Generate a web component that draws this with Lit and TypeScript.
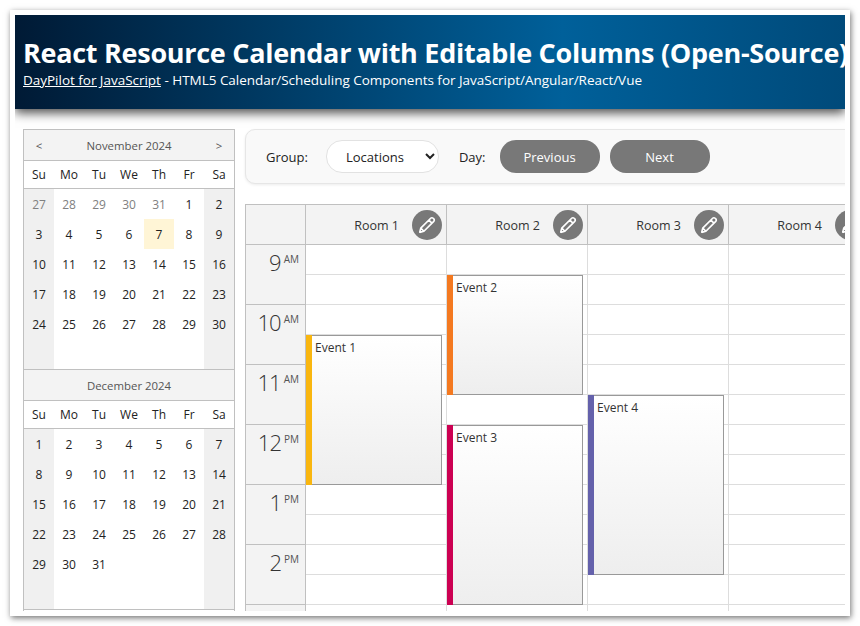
import { LitElement, html, css, svg } from "lit";
import { customElement, property } from "lit/decorators.js";

type Day = { label: string; other?: boolean; today?: boolean };

// one month page of the date picker, always 6 rows
function monthCells(first: number, count: number, prevCount: number, today = 0): Day[] {
  const cells: Day[] = [];
  for (let i = first - 1; i >= 0; i--) {
    cells.push({ label: String(prevCount - i), other: true });
  }
  for (let d = 1; d <= count; d++) {
    cells.push({ label: String(d), today: d === today });
  }
  while (cells.length < 42) cells.push({ label: "" });
  return cells;
}

@customElement("nav-month")
export class NavMonth extends LitElement {
  static styles = css`
    :host {
      display: block;
      font-size: 12px;
      color: #222;
    }
    .title {
      display: grid;
      grid-template-columns: repeat(7, 30px);
      height: 30px;
      line-height: 32px;
      background: #f3f3f3;
      border-bottom: 1px solid #c0c0c0;
      color: #555;
      font-size: 11.4px;
      text-align: center;
    }
    .title .name {
      grid-column: span 5;
    }
    .names {
      display: grid;
      grid-template-columns: repeat(7, 30px);
      height: 27px;
      line-height: 27px;
      text-align: center;
      border-bottom: 1px solid #c0c0c0;
    }
    .days {
      display: grid;
      grid-template-columns: repeat(7, 30px);
      grid-auto-rows: 30px;
      border-bottom: 1px solid #c0c0c0;
    }
    .day {
      line-height: 32px;
      text-align: center;
    }
    .weekend {
      background: #f0f0f0;
    }
    .other {
      color: #808080;
    }
    .today {
      background: #fff5d6;
    }
  `;

  @property() title = "";
  @property({ type: Boolean }) arrows = false;
  @property({ attribute: false }) cells: Day[] = [];

  render() {
    return html`
      <div class="title">
        <span>${this.arrows ? "<" : ""}</span>
        <span class="name">${this.title}</span>
        <span>${this.arrows ? ">" : ""}</span>
      </div>
      <div class="names">
        ${["Su", "Mo", "Tu", "We", "Th", "Fr", "Sa"].map((n) => html`<span>${n}</span>`)}
      </div>
      <div class="days">
        ${this.cells.map((c, i) => {
          const weekend = i % 7 === 0 || i % 7 === 6;
          const cls = [
            "day",
            weekend ? "weekend" : "",
            c.other ? "other" : "",
            c.today ? "today" : "",
          ].join(" ");
          return html`<div class=${cls}>${c.label}</div>`;
        })}
      </div>
    `;
  }
}

const pencil = svg`<path d="M4 20l1.2-4.6L16 4.6a1.9 1.9 0 0 1 2.7 0l.7.7a1.9 1.9 0 0 1 0 2.7L8.6 18.8z M14 6.6l3.4 3.4 M5.2 15.4l3.4 3.4"/>`;

// last row is only a sliver at the bottom, no label shows there
const HOURS: [string, string][] = [
  ["9", "AM"],
  ["10", "AM"],
  ["11", "AM"],
  ["12", "PM"],
  ["1", "PM"],
  ["2", "PM"],
  ["", ""],
];

type CalEvent = { text: string; top: number; height: number; color: string };

const ROOMS: { name: string; events: CalEvent[] }[] = [
  { name: "Room 1", events: [{ text: "Event 1", top: 90, height: 150, color: "#f9b60f" }] },
  {
    name: "Room 2",
    events: [
      { text: "Event 2", top: 30, height: 120, color: "#f47920" },
      { text: "Event 3", top: 180, height: 180, color: "#cc0052" },
    ],
  },
  { name: "Room 3", events: [{ text: "Event 4", top: 150, height: 180, color: "#6461ab" }] },
  { name: "Room 4", events: [] },
];

@customElement("app-root")
export class AppRoot extends LitElement {
  static styles = css`
    :host {
      display: block;
      height: 626px;
      padding: 10px;
      box-sizing: border-box;
      background: #fff;
      font-family: "Open Sans", "Noto Sans", sans-serif;
    }
    .frame {
      height: 606px;
      padding: 5px;
      box-sizing: border-box;
      background: #fff;
      box-shadow: 1px 2px 6px rgba(0, 0, 0, 0.55);
    }
    .page {
      height: 596px;
      overflow: hidden;
      background: #fff;
    }
    .header {
      position: relative;
      height: 94px;
      box-sizing: border-box;
      padding: 20px 0 0 8px;
      color: #fff;
      white-space: nowrap;
      background: linear-gradient(to right, #001a35 0%, #00609a 66%, #004a7a 100%);
      box-shadow: 0 4px 10px rgba(0, 0, 0, 0.7);
    }
    .header h1 {
      margin: 0;
      font-size: 27px;
      line-height: 36px;
      font-weight: 700;
      letter-spacing: -0.28px;
    }
    .header p {
      margin: -1px 0 0;
      font-size: 13.5px;
      line-height: 20px;
      letter-spacing: -0.02px;
    }
    .header a {
      color: #fff;
      text-decoration: underline;
    }
    .main {
      display: flex;
      gap: 10px;
      height: 502px;
      padding: 20px 0 0 8px;
      box-sizing: border-box;
    }
    .nav {
      flex: none;
      width: 210px;
      border: solid #c0c0c0;
      border-width: 1px 1px 0;
    }
    .right {
      flex: 1;
      min-width: 0;
    }
    .toolbar {
      display: flex;
      align-items: center;
      width: 700px;
      height: 55px;
      box-sizing: border-box;
      padding-left: 20px;
      border: 1px solid #e6e6e6;
      border-radius: 10px;
      background: #f9f9f9;
      box-shadow: 0 1px 3px rgba(0, 0, 0, 0.08);
      font-size: 13px;
      color: #222;
    }
    .toolbar select {
      width: 113px;
      height: 33px;
      margin: 0 20px 0 18px;
      padding-left: 15px;
      border: 1px solid #e2e2e2;
      border-radius: 16px;
      background: #fff;
      font: inherit;
      color: #222;
    }
    .toolbar button {
      width: 100px;
      height: 33px;
      margin-left: 10px;
      border: none;
      border-radius: 16px;
      background: #787878;
      color: #fff;
      font: inherit;
    }
    .toolbar .first {
      margin-left: 14px;
    }
    .cal {
      display: flex;
      width: 800px;
      margin-top: 20px;
      font-size: 12px;
      color: #333;
    }
    .times {
      flex: none;
      width: 59px;
      border: solid #c0c0c0;
      border-width: 0 1px;
      background: #f3f3f3;
    }
    .corner {
      height: 39px;
      border-top: 1px solid #c0c0c0;
      border-bottom: 1px solid #c0c0c0;
    }
    .hour {
      display: flex;
      justify-content: flex-end;
      gap: 3px;
      height: 57px;
      padding: 2px 6px 0 0;
      border-bottom: 1px solid #c0c0c0;
      font-size: 22px;
      font-weight: 300;
      line-height: 30px;
      letter-spacing: -1px;
      color: #333;
    }
    .hour small {
      margin-top: 3px;
      font-size: 10px;
      font-weight: 400;
      line-height: 18px;
      letter-spacing: 0;
      color: #555;
    }
    .col {
      flex: none;
      width: 141px;
    }
    .room {
      display: flex;
      align-items: center;
      justify-content: flex-end;
      gap: 13px;
      height: 38px;
      padding: 1px 4px 0 0;
      border: solid #c0c0c0;
      border-width: 1px 1px 1px 0;
      background: #f3f3f3;
      font-size: 12.5px;
    }
    .edit {
      display: block;
      width: 30px;
      height: 30px;
      padding: 4px;
      box-sizing: border-box;
      border-radius: 50%;
      background: #787878;
      fill: none;
      stroke: #fff;
      stroke-width: 1.8;
      stroke-linejoin: round;
    }
    .cells {
      position: relative;
      border-right: 1px solid #ddd;
    }
    .cell {
      height: 29px;
      border-bottom: 1px solid #ddd;
    }
    .event {
      position: absolute;
      left: 0;
      right: 4px;
      display: flex;
      box-sizing: border-box;
      border: 1px solid #999;
      border-left: none;
      background: linear-gradient(#fff, #eee);
      font-size: 12px;
      line-height: 24px;
    }
    .bar {
      flex: none;
      width: 6px;
      margin: -1px 0;
    }
    .event span {
      padding-left: 3px;
    }
  `;

  private nov = monthCells(5, 30, 31, 7);
  private dec = monthCells(0, 31, 30);

  render() {
    const slots = Array.from({ length: HOURS.length * 2 });
    return html`
      <div class="frame">
        <div class="page">
          <div class="header">
            <h1>React Resource Calendar with Editable Columns (Open-Source)</h1>
            <p>
              <a href="#">DayPilot for JavaScript</a> - HTML5 Calendar/Scheduling Components for
              JavaScript/Angular/React/Vue
            </p>
          </div>
          <div class="main">
            <div class="nav">
              <nav-month title="November 2024" arrows .cells=${this.nov}></nav-month>
              <nav-month title="December 2024" .cells=${this.dec}></nav-month>
            </div>
            <div class="right">
              <div class="toolbar">
                <span>Group:</span>
                <select>
                  <option>Locations</option>
                  <option>People</option>
                  <option>Tools</option>
                </select>
                <span>Day:</span>
                <button class="first">Previous</button>
                <button>Next</button>
              </div>
              <div class="cal">
                <div class="times">
                  <div class="corner"></div>
                  ${HOURS.map(
                    ([h, m]) => html`<div class="hour"><span>${h}</span><small>${m}</small></div>`,
                  )}
                </div>
                ${ROOMS.map(
                  (room) => html`
                    <div class="col">
                      <div class="room">
                        <span>${room.name}</span>
                        <svg class="edit" viewBox="0 0 24 24">${pencil}</svg>
                      </div>
                      <div class="cells">
                        ${slots.map(() => html`<div class="cell"></div>`)}
                        ${room.events.map(
                          (e) => html`
                            <div class="event" style="top:${e.top}px;height:${e.height}px">
                              <div class="bar" style="background:${e.color}"></div>
                              <span>${e.text}</span>
                            </div>
                          `,
                        )}
                      </div>
                    </div>
                  `,
                )}
              </div>
            </div>
          </div>
        </div>
      </div>
    `;
  }
}
